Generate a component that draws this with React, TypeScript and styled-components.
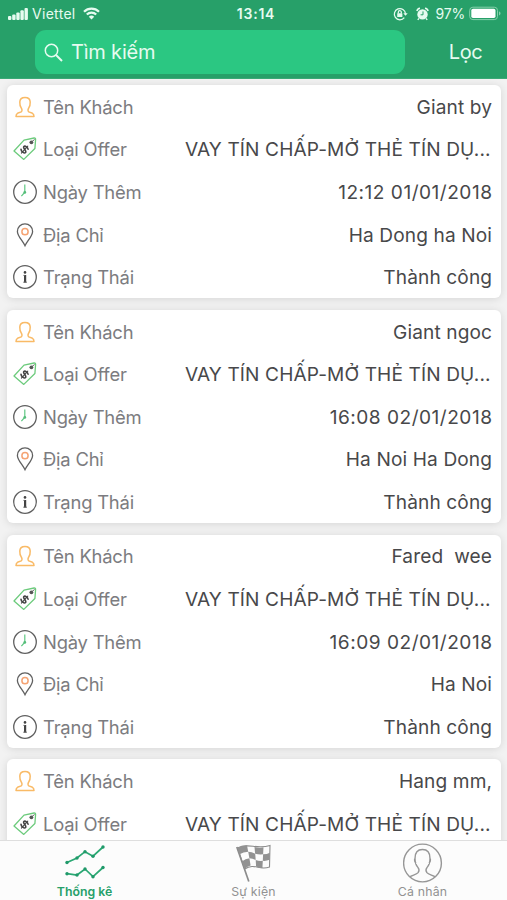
import React from "react";
import styled, { createGlobalStyle } from "styled-components";

const GlobalStyle = createGlobalStyle`
  * { box-sizing: border-box; }
  body { margin: 0; background: #f2f2f2; font-family: Inter, "Noto Sans", sans-serif; }
`;

const Screen = styled.div`
  width: 507px;
  height: 900px;
  display: flex;
  flex-direction: column;
  overflow: hidden;
`;

const Header = styled.header`
  flex: none;
  height: 79px;
  background: #27a069;
  color: #e6fbf0;
  border-bottom: 1px solid #3aa976;
`;

const StatusBar = styled.div`
  height: 30px;
  padding: 0 6px 3px 8px;
  display: grid;
  grid-template-columns: 1fr auto 1fr;
  align-items: center;
  font-size: 14px;
`;

const StatusGroup = styled.div<{ $end?: boolean }>`
  display: flex;
  align-items: center;
  justify-content: ${(p) => (p.$end ? "flex-end" : "flex-start")};
`;

const Carrier = styled.span`
  margin: 0 7px 0 4px;
  letter-spacing: 0.3px;
`;

const Clock = styled.span`
  font-weight: 600;
  letter-spacing: 0.75px;
  margin-left: 3px;
`;

const Percent = styled.span`
  margin: 0 4px 0 7px;
  letter-spacing: -0.2px;
`;

const SearchRow = styled.div`
  display: flex;
  padding-left: 35px;
`;

const SearchBox = styled.div`
  width: 370px;
  height: 44px;
  border-radius: 11px;
  background: #2bc782;
  display: flex;
  align-items: center;
  padding-left: 9px;
  gap: 8px;
  font-size: 20px;
  letter-spacing: -0.2px;
`;

const FilterButton = styled.button`
  flex: 1;
  border: 0;
  padding: 0 0 0 19px;
  background: none;
  color: inherit;
  font: 20px Inter, "Noto Sans", sans-serif;
  letter-spacing: -0.4px;
  text-align: center;
`;

const List = styled.main`
  flex: 1;
  min-height: 0;
  overflow: hidden;
  padding: 6px 6px 0 7px;
  background: #f2f2f2;
`;

const Card = styled.section`
  height: 213px;
  margin-bottom: 11.8px;
  border-radius: 6px;
  background: #fff;
  box-shadow: 0 1px 9px rgba(0, 0, 0, 0.12);
`;

const Row = styled.div`
  height: 42.6px;
  display: flex;
  align-items: center;
  padding: 1px 9px 0 5px;
`;

const IconSlot = styled.span`
  width: 26px;
  height: 26px;
  flex: none;
  display: flex;
  margin-right: 5px;
`;

const Label = styled.span`
  font-size: 18.4px;
  letter-spacing: -0.2px;
  color: #7c7c80;
`;

const Value = styled.span<{ $spacing: number; $inset: number }>`
  margin-left: auto;
  font-size: 19.1px;
  color: #48484a;
  white-space: pre;
  letter-spacing: ${(p) => p.$spacing}px;
  margin-right: ${(p) => p.$inset - p.$spacing}px;
`;

const TabBar = styled.nav`
  flex: none;
  height: 60px;
  display: grid;
  grid-template-columns: repeat(3, 1fr);
  background: #fcfcfc;
  border-top: 1px solid #dedede;
`;

const Tab = styled.a<{ $active?: boolean }>`
  display: flex;
  flex-direction: column;
  align-items: center;
  padding-top: 2px;
  font-size: 12.3px;
  line-height: 17px;
  font-weight: ${(p) => (p.$active ? 600 : 400)};
  letter-spacing: ${(p) => (p.$active ? 0 : 0.2)}px;
  color: ${(p) => (p.$active ? "#26a06a" : "#929292")};
  svg { flex: none; }
`;

const SignalIcon = () => (
  <svg width="20" height="14" viewBox="0 0 20 14" fill="currentColor">
    <rect x="0" y="9" width="3.4" height="4" rx="1" />
    <rect x="4.2" y="7.5" width="3.4" height="5.5" rx="1" />
    <rect x="8.3" y="5.5" width="3.4" height="7.5" rx="1" />
    <rect x="12.4" y="3.3" width="3.4" height="9.7" rx="1" />
    <rect x="16.5" y="1" width="3.4" height="12" rx="1" />
  </svg>
);

const WifiIcon = () => (
  <svg width="17" height="13" viewBox="0 0 17 13" fill="none" stroke="currentColor" strokeWidth="2.2">
    <path d="M1 4.7a10.6 10.6 0 0 1 15 0M3.8 7.5a6.7 6.7 0 0 1 9.4 0" />
    <path d="M8.5 12.4 5.8 9.8a3.8 3.8 0 0 1 5.4 0z" fill="currentColor" stroke="none" />
  </svg>
);

const LockIcon = () => (
  <svg width="15" height="14" viewBox="0 0 15 14" fill="none" stroke="currentColor" strokeWidth="1.3">
    <path d="M11.3 10.7A5.6 5.6 0 1 1 12.5 6.8" />
    <path d="m10.3 6.3 2.2 2.5 2.2-2.5z" fill="currentColor" stroke="none" />
    <rect x="4.2" y="6.2" width="5.2" height="3.8" rx=".5" fill="currentColor" stroke="none" />
    <path d="M5.3 6.4V5.2a1.5 1.5 0 0 1 3 0v1.2" />
  </svg>
);

const AlarmSmall = styled.svg`
  margin-left: 8px;
`;

const AlarmIcon = () => (
  <AlarmSmall width="13" height="14" viewBox="0 0 13 14" fill="none" stroke="currentColor" strokeWidth="1.5">
    <circle cx="6.5" cy="7.4" r="5.2" fill="currentColor" stroke="none" />
    <path d="M.9 4A3.500 3.500 0 0 1 4 1.200M12.100 4A3.500 3.500 0 0 0 9 1.200M3 11.400l-1.200 1.500M10 11.400l1.200 1.500" />
    <path d="M7 4.400v3.400H4.600" stroke="#27a069" strokeWidth="1" />
  </AlarmSmall>
);

const BatteryIcon = () => (
  <svg width="32" height="15" viewBox="0 0 32 15" fill="none">
    <rect x=".7" y="1.2" width="27.8" height="12.4" rx="3.2" stroke="#84cfaa" strokeWidth="1" />
    <rect x="2.3" y="2.8" width="24.2" height="9.2" rx="1.7" fill="#fff" />
    <path d="M30 5.5c2 .6 2 3.3 0 3.9z" fill="#84cfaa" />
  </svg>
);

const SearchIcon = () => (
  <svg width="19" height="19" viewBox="0 0 19 19" fill="none" stroke="currentColor" strokeWidth="1.5">
    <circle cx="7.5" cy="7.5" r="6.2" />
    <path d="m12 12 6 6" strokeWidth="1.9" />
  </svg>
);

const silhouette =
  "M9.4 14.2C7.900 12.500 7.700 10.300 7.800 8 7.900 4.700 10 3.400 13 3.400s5.100 1.300 5.200 4.600c.1 2.300-.1 4.500-1.600 6.200-.9 1.200-.7 3 .2 3.700l3.700 1.400c1.200.6 1.500 1.700 1.500 3.300H4c0-1.600.3-2.700 1.500-3.300l3.700-1.400c.9-.7 1.100-2.500.2-3.700z";

const PersonIcon = () => (
  <svg width="26" height="26" viewBox="0 0 26 26" fill="none">
    <path d={silhouette} stroke="#f9ba66" strokeWidth="1.5" strokeLinejoin="round" />
  </svg>
);

const TagIcon = () => (
  <svg width="26" height="26" viewBox="0 0 26 26" fill="none">
    <path d="m2 15 10-10.900 10.100-2.100c1.100-.1 1.500.4 1.500 1.400l-.7 9.100L11.800 23.400z" stroke="#6ccb7c" strokeWidth="1.3" strokeLinejoin="round" />
    <circle cx="19.400" cy="6.300" r="1.900" fill="#555" />
    <path d="m19.800 5.700 2.800-2.200" stroke="#666" />
    <g transform="rotate(42 12.500 13.400)" stroke="#444" strokeLinecap="round">
      <path d="M15.100 10.900c-1.200-1.100-5-1.100-5 .8 0 2.200 5.300 1 5.300 3.300 0 2.100-4.200 2-5.500.7" strokeWidth="1.6" />
      <path d="M12.700 8.700v9.600" strokeWidth="1" />
    </g>
  </svg>
);

const ClockIcon = () => (
  <svg width="26" height="26" viewBox="0 0 26 26" fill="none">
    <circle cx="13" cy="13" r="11.300" stroke="#606060" strokeWidth="1.300" />
    <path d="M12.800 5.500v7.700l-3.400 3.900" stroke="#60c783" strokeWidth="1.200" />
    <circle cx="12.800" cy="13.400" r="1.400" fill="#54bd79" />
  </svg>
);

const PinIcon = () => (
  <svg width="26" height="26" viewBox="0 0 26 26" fill="none">
    <path d="M13 23.700C10.400 18.500 5.400 13.900 5.400 9.400a7.600 7.600 0 0 1 15.200 0C20.600 13.900 15.600 18.500 13 23.700z" stroke="#606060" strokeWidth="1.300" />
    <circle cx="13" cy="9.700" r="3.100" stroke="#f5a373" strokeWidth="1.500" />
  </svg>
);

const InfoIcon = () => (
  <svg width="26" height="26" viewBox="0 0 26 26" fill="none">
    <circle cx="13" cy="13" r="11.300" stroke="#606060" strokeWidth="1.300" />
    <circle cx="13" cy="8.400" r="1.300" fill="#444" />
    <path d="M13.100 11v7.600" stroke="#444" strokeWidth="2.200" />
    <path d="M11.400 11.400h1.600M11.200 18.200h3.800" stroke="#666" strokeWidth=".9" />
  </svg>
);

const points = [
  [2, 19.5], [12, 15], [20, 8.7], [28, 13.2], [38, 4],
  [2, 30.7], [12, 32], [20, 26], [28, 33.7], [38, 24.5],
];

const ChartIcon = () => (
  <svg width="40" height="40" viewBox="0 0 40 40" fill="none">
    <path d="m2 19.5 10-4.5 8-6.3 8 4.5L38 4M2 30.7 12 32l8-6 8 7.7 10-9.2" stroke="#2aa873" strokeWidth="1.7" />
    {points.map(([x, y]) => (
      <circle key={`${x}-${y}`} cx={x} cy={y} r="1.700" fill="#20996a" />
    ))}
  </svg>
);

const FlagIcon = () => (
  <svg width="40" height="40" viewBox="0 0 40 40" fill="none" stroke="#8c8c8c">
    <path d="m2.8 4 12 34.5" strokeWidth="1.7" />
    <path d="M3.5 5C14-1 22 7 36 2.5L35.5 24C25 28 21 19.5 10.7 26z" strokeWidth="1.1" />
    <g fill="#929292" stroke="none">
      <path d="M3.5 5q5-3 9.5-2.7l1.2 6.5q-5 0-8.6 2.5z" />
      <path d="M20.5 4q5 1.2 9 .3l-.4 7q-4 .4-8-.5z" />
      <path d="M14.2 8.8q3.5.2 7 2l.5 6.2q-3.3-1.6-6.3-1.8z" />
      <path d="M29.1 11.3q4 0 6.7-1.5l-.2 7q-3.5 1.4-6.8 1z" />
      <path d="M7.8 18.5q3.800-3 7.600-3.300l1.200 7.300q-3 .5-5.900 3.500z" />
      <path d="M21.700 17q3.500 1.300 7.100.8l-.4 7.400q-3.300-.1-6.300-1.700z" />
    </g>
  </svg>
);

const ProfileIcon = () => (
  <svg width="40" height="40" viewBox="0 0 40 40" fill="none" stroke="#969696" strokeWidth="1.4">
    <circle cx="19.5" cy="20" r="18.9" />
    <path d="M6.700 34c1.800-1.800 6.800-2.200 8.400-4.300 1.300-1.800.7-4.200-.2-5.300-1.700-2-2.900-4.800-2.900-9C12 9.300 14.500 6.500 19.500 6.500s7.500 2.800 7.500 8.900c0 4.200-1.200 7-2.900 9-.9 1.100-1.500 3.500-.2 5.300 1.600 2.100 6.600 2.500 8.400 4.300M12 15.300c-1 1.700-.2 4.300 1.200 5M27 15.300c1 1.700.2 4.300-1.200 5" />
  </svg>
);

const offer = "VAY TÍN CHẤP-MỞ THẺ TÍN DỤ...";

type Customer = { name: string; added?: string; address?: string; status?: string };

const customers: Customer[] = [
  { name: "Giant by", added: "12:12 01/01/2018", address: "Ha Dong ha Noi", status: "Thành công" },
  { name: "Giant ngoc", added: "16:08 02/01/2018", address: "Ha Noi Ha Dong", status: "Thành công" },
  { name: "Fared  wee", added: "16:09 02/01/2018", address: "Ha Noi", status: "Thành công" },
  { name: "Hang mm," },
];

type FieldProps = {
  icon: React.ReactNode;
  label: string;
  value: string;
  spacing?: number;
  inset?: number;
};

const Field = ({ icon, label, value, spacing = 0.12, inset = 0 }: FieldProps) => (
  <Row>
    <IconSlot>{icon}</IconSlot>
    <Label>{label}</Label>
    <Value $spacing={spacing} $inset={inset}>{value}</Value>
  </Row>
);

export default function App() {
  return (
    <Screen>
      <GlobalStyle />
      <Header>
        <StatusBar>
          <StatusGroup>
            <SignalIcon />
            <Carrier>Viettel</Carrier>
            <WifiIcon />
          </StatusGroup>
          <Clock>13:14</Clock>
          <StatusGroup $end>
            <LockIcon />
            <AlarmIcon />
            <Percent>97%</Percent>
            <BatteryIcon />
          </StatusGroup>
        </StatusBar>
        <SearchRow>
          <SearchBox>
            <SearchIcon />
            Tìm kiếm
          </SearchBox>
          <FilterButton>Lọc</FilterButton>
        </SearchRow>
      </Header>
      <List>
        {customers.map((c) => (
          <Card key={c.name}>
            <Field icon={<PersonIcon />} label="Tên Khách" value={c.name} />
            <Field icon={<TagIcon />} label="Loại Offer" value={offer} inset={1.5} />
            {c.added && <Field icon={<ClockIcon />} label="Ngày Thêm" value={c.added} spacing={0.5} />}
            {c.address && <Field icon={<PinIcon />} label="Địa Chỉ" value={c.address} />}
            {c.status && <Field icon={<InfoIcon />} label="Trạng Thái" value={c.status} />}
          </Card>
        ))}
      </List>
      <TabBar>
        <Tab $active>
          <ChartIcon />
          Thống kê
        </Tab>
        <Tab>
          <FlagIcon />
          Sự kiện
        </Tab>
        <Tab>
          <ProfileIcon />
          Cá nhân
        </Tab>
      </TabBar>
    </Screen>
  );
}
